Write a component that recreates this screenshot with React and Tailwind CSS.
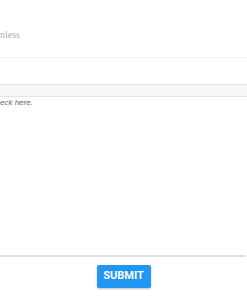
export default function App() {
  return (
    <div className="w-[247px] h-[296px] overflow-hidden bg-white flex flex-col">
      <div className="h-[58px] pt-[29px] border-b border-[#f0f0f0]">
        <p className="text-[10px] leading-[12px] text-[#b0b0b0] font-['Liberation_Serif',serif]">
          nless
        </p>
      </div>
      <div className="h-[26px]" />
      <div className="h-[13px] bg-[#f7f7f7] border-y border-[#e3e3e3]" />
      <p className="mt-[1px] text-[8px] leading-[10px] italic text-[#666] font-['Liberation_Sans',sans-serif]">
        eck here.
      </p>
      <div className="flex-1" />
      <div className="h-[2px] bg-[#e0e0e0] mr-[1px]" />
      <div className="flex justify-center pt-[8px] pb-[8px]">
        <button className="w-[54px] h-[23px] rounded-[2px] bg-[#2196f3] text-white text-[11px] font-bold font-['Roboto',sans-serif] shadow-[0_1px_2px_rgba(0,0,0,0.25)]">
          SUBMIT
        </button>
      </div>
    </div>
  );
}
